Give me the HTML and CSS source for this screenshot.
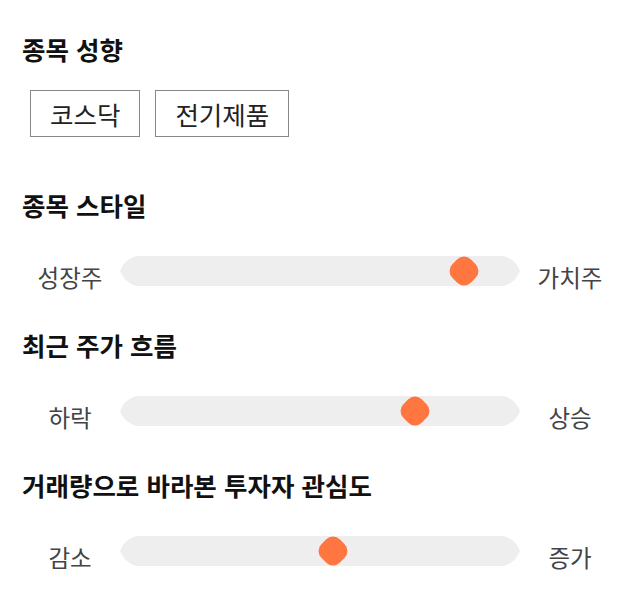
FILE: index.html
```html
<!DOCTYPE html>
<html lang="ko">
<head>
  <meta charset="UTF-8">
  <title>종목 분석</title>
  <link rel="stylesheet" href="styles.css">
</head>
<body>

  <section class="group">
    <h2>종목 성향</h2>
    <div class="tags">
      <span class="tag">코스닥</span>
      <span class="tag">전기제품</span>
    </div>
  </section>

  <section class="group">
    <h2>종목 스타일</h2>
    <div class="scale">
      <span class="end">성장주</span>
      <div class="slider">
        <div class="track"></div>
        <div class="thumb" style="left: 86%"></div>
      </div>
      <span class="end">가치주</span>
    </div>
  </section>

  <section class="group">
    <h2>최근 주가 흐름</h2>
    <div class="scale">
      <span class="end">하락</span>
      <div class="slider">
        <div class="track"></div>
        <div class="thumb" style="left: 73.75%"></div>
      </div>
      <span class="end">상승</span>
    </div>
  </section>

  <section class="group">
    <h2>거래량으로 바라본 투자자 관심도</h2>
    <div class="scale">
      <span class="end">감소</span>
      <div class="slider">
        <div class="track"></div>
        <div class="thumb" style="left: 53.25%"></div>
      </div>
      <span class="end">증가</span>
    </div>
  </section>

</body>
</html>
```

FILE: styles.css
```css
html { font-family: "Noto Sans CJK KR", "Noto Sans", sans-serif; color: #222; background: #fff; }
body { margin: 0; padding: 33px 0 0 22px; }
h2 { margin: 0; font-size: 25.5px; line-height: 32px; font-weight: 700; color: #111; }
.group { margin-bottom: 43px; }
.group:first-child { margin-bottom: 52px; }

.tags { display: flex; gap: 15px; margin: 25px 0 0 8px; }
.tag { border: 1px solid #888; padding: 0 19px; font-size: 25.5px; line-height: 45px; color: #222; }

.scale { display: grid; grid-template-columns: 100px 400px 100px; grid-template-rows: 30px;
  margin: 35px 0 0 -2px; }
.end { align-self: start; text-align: center; font-size: 23.5px; line-height: 30px; color: #444; padding-top: 6px; }
.slider { position: relative; height: 30px; }
.track { height: 30px; background: #eeeeee;
  clip-path: path('M16 0H384A25 25 0 0 1 400 15A25 25 0 0 1 384 30H16A25 25 0 0 1 0 15A25 25 0 0 1 16 0Z'); }
.thumb { position: absolute; top: 2px; width: 26px; height: 26px; margin-left: -13px; background: #ff7640;
  border-radius: 9.5px; transform: rotate(45deg); }
```
